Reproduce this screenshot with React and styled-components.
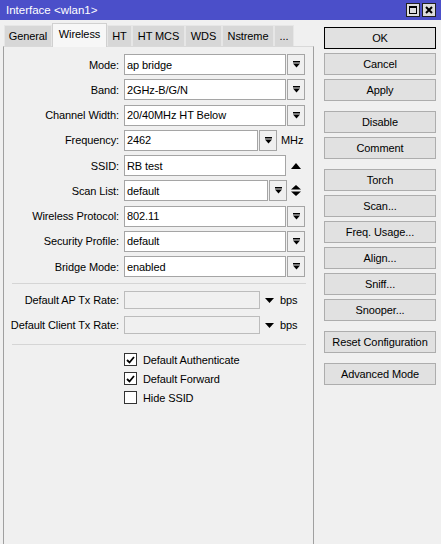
import styled, { createGlobalStyle } from "styled-components"

const GlobalStyle = createGlobalStyle`
  html, body {
    margin: 0;
    padding: 0;
    background: #f0f0f0;
  }
  body {
    font-family: "Liberation Sans", Arial, sans-serif;
    font-size: 11px;
    letter-spacing: -0.1px;
    color: #000;
  }
  * { box-sizing: border-box; }
`

const Window = styled.div`
  width: 441px;
  height: 544px;
  background: #f0f0f0;
  display: flex;
  flex-direction: column;
  overflow: hidden;
`

const TitleBar = styled.div`
  height: 20px;
  background: #4b4fc9;
  color: #fff;
  display: flex;
  align-items: center;
  padding: 0 5px 0 6px;
`

const Title = styled.span`
  flex: 1;
  font-size: 11.5px;
  letter-spacing: 0;
`

const TitleButtons = styled.div`
  display: flex;
  gap: 2px;
`

const TitleBtn = styled.div`
  width: 14px;
  height: 14px;
  background: #dcdcdc;
  border: 1px solid #202020;
  display: flex;
  align-items: center;
  justify-content: center;
`

const Body = styled.div`
  flex: 1;
  display: flex;
`

const LeftCol = styled.div`
  width: 311px;
  margin-left: 3px;
  display: flex;
  flex-direction: column;
`

const TabStrip = styled.div`
  height: 26px;
  display: flex;
  align-items: flex-end;
  padding-left: 1px;
  position: relative;
  z-index: 1;
`

const Tab = styled.div`
  width: ${(p) => p.$w}px;
  height: ${(p) => (p.$active ? 24 : 21)}px;
  margin-bottom: ${(p) => (p.$active ? -1 : 0)}px;
  background: ${(p) => (p.$active ? "#f7f7f7" : "#d7d7d7")};
  border: 1px solid ${(p) => (p.$active ? "#d0d0d0" : "#e6e6e6")};
  border-bottom: none;
  display: flex;
  align-items: center;
  justify-content: center;
  padding-bottom: ${(p) => (p.$active ? 3 : 0)}px;
`

const Panel = styled.div`
  flex: 1;
  border: 1px solid #a0a0a0;
  border-top-color: #d9d9d9;
  border-bottom: none;
  padding-top: 7px;
`

const Rows = styled.div`
  display: flex;
  flex-direction: column;
  gap: 4.25px;
`

const Row = styled.div`
  display: flex;
  align-items: center;
  height: ${(p) => p.$h || 21}px;
  margin-top: ${(p) => p.$mt || 0}px;
`

const Label = styled.div`
  width: 120px;
  padding-right: 5px;
  text-align: right;
  white-space: nowrap;
`

const Input = styled.div`
  width: ${(p) => p.$w}px;
  height: 100%;
  border: 1px solid ${(p) => (p.$disabled ? "#bcbcbc" : "#a5a5a5")};
  background: ${(p) => (p.$disabled ? "#f0f0f0" : "#fff")};
  padding-left: 2px;
  display: flex;
  align-items: center;
  white-space: nowrap;
`

const DropBtn = styled.div`
  width: 18px;
  height: 100%;
  margin-left: ${(p) => p.$ml ?? 1}px;
  border: 1px solid #a5a5a5;
  background: #f0f0f0;
  display: flex;
  align-items: center;
  justify-content: center;
`

const Slot = styled.div`
  width: ${(p) => p.$w}px;
  height: 100%;
  display: flex;
  align-items: center;
  justify-content: center;
`

const Unit = styled.span`
  margin-left: ${(p) => p.$ml}px;
`

const Separator = styled.div`
  height: 1px;
  width: 294px;
  margin: ${(p) => p.$m};
  background: #d5d5d5;
`

const Checks = styled.div`
  display: flex;
  flex-direction: column;
  gap: 6px;
  padding-left: 120px;
`

const CheckRow = styled.label`
  display: flex;
  align-items: center;
  height: 13px;
  gap: 6px;
`

const Box = styled.span`
  width: 13px;
  height: 13px;
  border: 1px solid #333;
  background: #fff;
  display: flex;
  align-items: center;
  justify-content: center;
`

const RightCol = styled.div`
  width: 112px;
  margin-left: 10px;
  padding-top: 7px;
  display: flex;
  flex-direction: column;
  gap: 10px;
`

const Group = styled.div`
  display: flex;
  flex-direction: column;
  gap: 4px;
`

const Button = styled.div`
  height: 22px;
  border: 1px solid ${(p) => (p.$default ? "#000" : "#adadad")};
  background: #e1e1e1;
  display: flex;
  align-items: center;
  justify-content: center;
  white-space: nowrap;
`

const DropIcon = () => (
  <svg width="7" height="7" viewBox="0 0 7 7">
    <rect x="0" y="0" width="7" height="1.5" fill="#000" />
    <polygon points="0,2.5 7,2.5 3.5,6.5" fill="#000" />
  </svg>
)

const UpIcon = () => (
  <svg width="10" height="6" viewBox="0 0 10 6">
    <polygon points="0,6 10,6 5,0" fill="#000" />
  </svg>
)

const UpDownIcon = () => (
  <svg width="10" height="11" viewBox="0 0 10 11">
    <polygon points="0,4.5 10,4.5 5,0" fill="#000" />
    <polygon points="0,6.5 10,6.5 5,11" fill="#000" />
  </svg>
)

const DownIcon = () => (
  <svg width="9" height="5" viewBox="0 0 9 5">
    <polygon points="0,0 9,0 4.5,5" fill="#000" />
  </svg>
)

const CheckIcon = () => (
  <svg width="9" height="8" viewBox="0 0 9 8">
    <polyline points="1,4 3.5,6.5 8,1" fill="none" stroke="#000" strokeWidth="1.8" />
  </svg>
)

const tabs = [
  { name: "General", w: 48 },
  { name: "Wireless", w: 55, active: true },
  { name: "HT", w: 25 },
  { name: "HT MCS", w: 53 },
  { name: "WDS", w: 37 },
  { name: "Nstreme", w: 52 },
  { name: "...", w: 20 },
]

const selects = [
  { label: "Mode", value: "ap bridge" },
  { label: "Band", value: "2GHz-B/G/N" },
  { label: "Channel Width", value: "20/40MHz HT Below" },
]

const selects2 = [
  { label: "Wireless Protocol", value: "802.11" },
  { label: "Security Profile", value: "default" },
  { label: "Bridge Mode", value: "enabled" },
]

const buttonGroups = [
  ["OK", "Cancel", "Apply"],
  ["Disable", "Comment"],
  ["Torch", "Scan...", "Freq. Usage...", "Align...", "Sniff...", "Snooper..."],
  ["Reset Configuration"],
  ["Advanced Mode"],
]

const checks = [
  { label: "Default Authenticate", on: true },
  { label: "Default Forward", on: true },
  { label: "Hide SSID", on: false },
]

const App = () => {
  return (
    <>
      <GlobalStyle />
      <Window>
        <TitleBar>
          <Title>Interface &lt;wlan1&gt;</Title>
          <TitleButtons>
            <TitleBtn>
              <svg width="8" height="8" viewBox="0 0 8 8">
                <rect x="0.5" y="0.5" width="7" height="7" fill="none" stroke="#000" />
                <rect x="0" y="0" width="8" height="2" fill="#000" />
              </svg>
            </TitleBtn>
            <TitleBtn>
              <svg width="8" height="8" viewBox="0 0 8 8">
                <path d="M1 1 L7 7 M7 1 L1 7" stroke="#000" strokeWidth="2" />
              </svg>
            </TitleBtn>
          </TitleButtons>
        </TitleBar>
        <Body>
          <LeftCol>
            <TabStrip>
              {tabs.map((t) => (
                <Tab key={t.name} $w={t.w} $active={t.active}>
                  {t.name}
                </Tab>
              ))}
            </TabStrip>
            <Panel>
              <Rows>
                {selects.map((s) => (
                  <Row key={s.label}>
                    <Label>{s.label}:</Label>
                    <Input $w={162}>{s.value}</Input>
                    <DropBtn>
                      <DropIcon />
                    </DropBtn>
                  </Row>
                ))}
                <Row>
                  <Label>Frequency:</Label>
                  <Input $w={134}>2462</Input>
                  <DropBtn>
                    <DropIcon />
                  </DropBtn>
                  <Unit $ml={4}>MHz</Unit>
                </Row>
                <Row>
                  <Label>SSID:</Label>
                  <Input $w={162}>RB test</Input>
                  <Slot $w={20}>
                    <UpIcon />
                  </Slot>
                </Row>
                <Row>
                  <Label>Scan List:</Label>
                  <Input $w={144}>default</Input>
                  <DropBtn>
                    <DropIcon />
                  </DropBtn>
                  <Slot $w={18}>
                    <UpDownIcon />
                  </Slot>
                </Row>
                {selects2.map((s) => (
                  <Row key={s.label}>
                    <Label>{s.label}:</Label>
                    <Input $w={162}>{s.value}</Input>
                    <DropBtn>
                      <DropIcon />
                    </DropBtn>
                  </Row>
                ))}
              </Rows>
              <Separator $m="6px 0 0 8px" />
              <Row $h={18} $mt={7}>
                <Label>Default AP Tx Rate:</Label>
                <Input $w={136} $disabled />
                <Slot $w={18}>
                  <DownIcon />
                </Slot>
                <Unit $ml={2}>bps</Unit>
              </Row>
              <Row $h={18} $mt={7}>
                <Label>Default Client Tx Rate:</Label>
                <Input $w={136} $disabled />
                <Slot $w={18}>
                  <DownIcon />
                </Slot>
                <Unit $ml={2}>bps</Unit>
              </Row>
              <Separator $m="10px 0 8px 8px" />
              <Checks>
                {checks.map((c) => (
                  <CheckRow key={c.label}>
                    <Box>{c.on && <CheckIcon />}</Box>
                    {c.label}
                  </CheckRow>
                ))}
              </Checks>
            </Panel>
          </LeftCol>
          <RightCol>
            {buttonGroups.map((g, i) => (
              <Group key={i}>
                {g.map((b) => (
                  <Button key={b} $default={b === "OK"}>
                    {b}
                  </Button>
                ))}
              </Group>
            ))}
          </RightCol>
        </Body>
      </Window>
    </>
  )
}

export default App
